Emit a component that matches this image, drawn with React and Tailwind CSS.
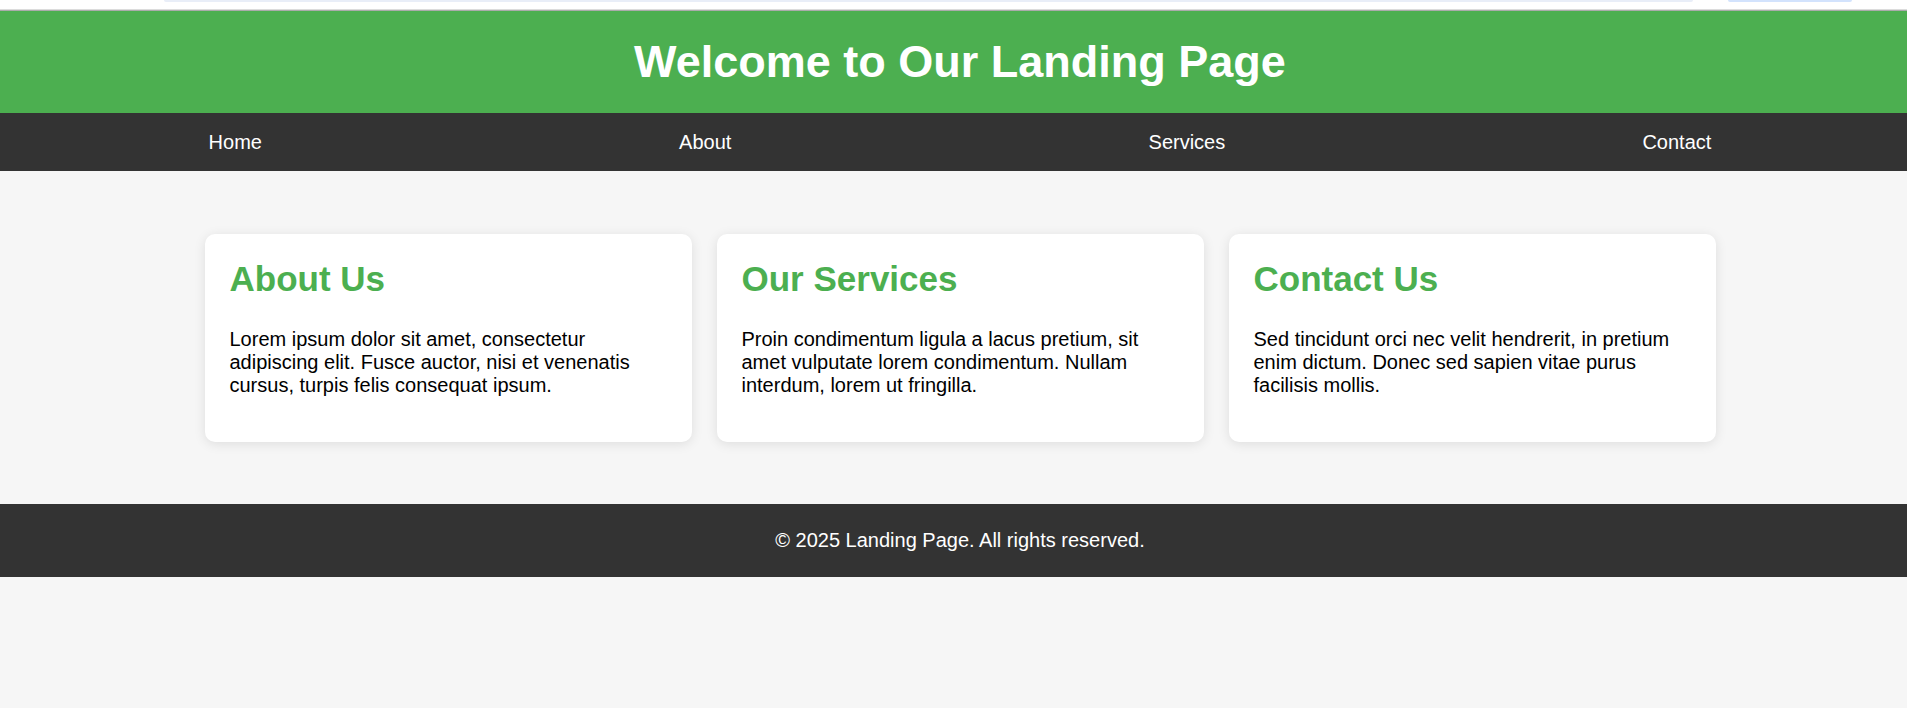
export default function App() {
  const cards = [
    {
      title: "About Us",
      text: "Lorem ipsum dolor sit amet, consectetur adipiscing elit. Fusce auctor, nisi et venenatis cursus, turpis felis consequat ipsum.",
    },
    {
      title: "Our Services",
      text: "Proin condimentum ligula a lacus pretium, sit amet vulputate lorem condimentum. Nullam interdum, lorem ut fringilla.",
    },
    {
      title: "Contact Us",
      text: "Sed tincidunt orci nec velit hendrerit, in pretium enim dictum. Donec sed sapien vitae purus facilisis mollis.",
    },
  ];
  return (
    <div className="w-full min-h-screen overflow-hidden bg-[#f6f6f6] font-['Liberation_Sans',Arial,sans-serif]">
      <div className="w-[1920px]">
        {/* top browser strip */}
        <div className="h-[9px] bg-white flex items-start">
          <div className="ml-[164px] w-[1529px] h-[2px] rounded-b-[3px] bg-[#e9eef8]" />
          <div className="ml-[35px] w-[124px] h-[2px] rounded-b-[3px] bg-[#d3e3fd]" />
        </div>
        <div className="h-[1px] bg-[#dcdcdc]" />
        <div className="h-[1px] bg-[#ababab]" />

        <header className="h-[102px] bg-[#4CAF50] flex items-center justify-center">
          <h1 className="text-[45px] font-bold text-white leading-[normal]">
            Welcome to Our Landing Page
          </h1>
        </header>

        <nav className="h-[58px] bg-[#333333] flex items-center justify-around">
          {["Home", "About", "Services", "Contact"].map((l) => (
            <a key={l} href="#" className="text-white text-[20px] leading-[normal]">
              {l}
            </a>
          ))}
        </nav>

        <main className="pt-[63px] pb-[62px] flex justify-center gap-[25px]">
          {cards.map((c) => (
            <div
              key={c.title}
              className="w-[487px] bg-white rounded-[10px] p-[25px] shadow-[0_2px_12px_rgba(0,0,0,0.1)]"
            >
              <h2 className="text-[35px] font-bold text-[#4CAF50] leading-[normal] mb-[29px]">
                {c.title}
              </h2>
              <p className="text-[20px] text-black leading-[normal] mb-[20px]">{c.text}</p>
            </div>
          ))}
        </main>

        <footer className="h-[73px] bg-[#333333] flex items-center justify-center">
          <p className="text-white text-[20px] leading-[normal]">
            © 2025 Landing Page. All rights reserved.
          </p>
        </footer>
      </div>
    </div>
  );
}
